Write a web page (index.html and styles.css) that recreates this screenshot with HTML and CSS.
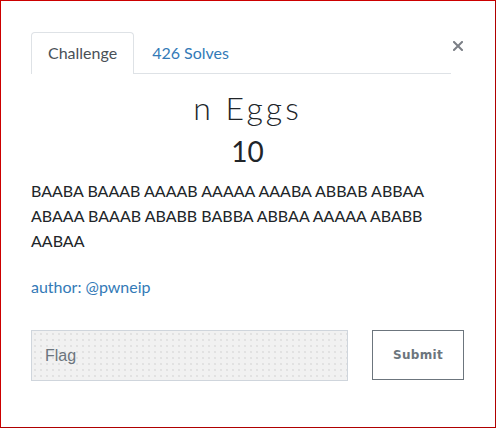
FILE: index.html
```html
<!DOCTYPE html>
<html>
<head>
<meta charset="utf-8">
<link rel="stylesheet" href="styles.css">
</head>
<body>
<div class="frame">
  <button class="close" aria-label="Close">
    <svg width="10" height="10" viewBox="0 0 10 10"><path d="M1 1 L9 9 M9 1 L1 9" stroke="#7b7f86" stroke-width="2" stroke-linecap="square"/></svg>
  </button>
  <div class="content">
    <nav class="tabs">
      <a class="tab active">Challenge</a>
      <a class="tab">426 Solves</a>
    </nav>
    <h3 class="name">n Eggs</h3>
    <h4 class="value">10</h4>
    <p class="desc">BAABA BAAAB AAAAB AAAAA AAABA ABBAB ABBAA ABAAA BAAAB ABABB BABBA ABBAA AAAAA ABABB AABAA</p>
    <p class="author">author: @pwneip</p>
    <div class="submit-row">
      <div class="flag-input">Flag</div>
      <button class="submit">Submit</button>
    </div>
  </div>
</div>
</body>
</html>
```
FILE: styles.css
```css
html, body {
  margin: 0;
  padding: 0;
  background: #fff;
}
.frame {
  position: relative;
  width: 496px;
  height: 428px;
  box-sizing: border-box;
  border: 1px solid #cc0000;
  border-right-color: #b00000;
  border-bottom-color: #b00000;
  font-family: Lato, "Liberation Sans", sans-serif;
  overflow: hidden;
}
.close {
  position: absolute;
  top: 39px;
  left: 451px;
  padding: 0;
  border: 0;
  background: none;
  width: 12px;
  height: 12px;
  display: flex;
  align-items: center;
  justify-content: center;
}
.content {
  padding: 31px 31px 0 30px;
}
.tabs {
  display: flex;
  border-bottom: 1px solid #dee2e6;
  margin-right: 13px;
}
.tab {
  display: block;
  height: 40px;
  line-height: 40px;
  padding: 0 16px 0 17px;
  border: 1px solid transparent;
  border-bottom: 0;
  border-radius: 4px 4px 0 0;
  font-size: 16px;
  color: #337ab7;
  margin-bottom: -1px;
}
.tab.active {
  padding: 0 16px;
  color: #495057;
  border-color: #dee2e6;
  background: #fff;
  height: 41px;
}
.name {
  margin: 15px 0 0;
  text-align: center;
  font-size: 32px;
  font-weight: 300;
  line-height: 38px;
  color: #212529;
  letter-spacing: 3px;
}
.value {
  margin: 6px 0 0;
  text-align: center;
  font-size: 28px;
  font-weight: 400;
  line-height: 36px;
  color: #212529;
}
.desc {
  margin: 9px 0 0;
  font-size: 16px;
  line-height: 25px;
  color: #212529;
}
.author {
  margin: 21px 0 0;
  font-size: 16px;
  line-height: 25px;
  color: #337ab7;
}
.submit-row {
  display: flex;
  justify-content: space-between;
  margin-top: 31px;
}
.flag-input {
  width: 317px;
  height: 51px;
  box-sizing: border-box;
  border: 1px solid #cfd5dc;
  background-color: #f1f1f1;
  background-image: radial-gradient(circle, #d9d9d9 0.6px, transparent 0.9px);
  background-size: 6px 6px;
  padding-left: 13px;
  display: flex;
  align-items: center;
  font-family: "Liberation Sans", Arial, sans-serif;
  font-size: 16px;
  color: #6c757d;
}
.submit {
  width: 92px;
  height: 50px;
  box-sizing: border-box;
  border: 1px solid #6c757d;
  background: #fff;
  font-family: "DejaVu Sans", sans-serif;
  font-weight: bold;
  font-size: 12px;
  letter-spacing: 0.3px;
  color: #6c757d;
  padding: 0;
}
```
